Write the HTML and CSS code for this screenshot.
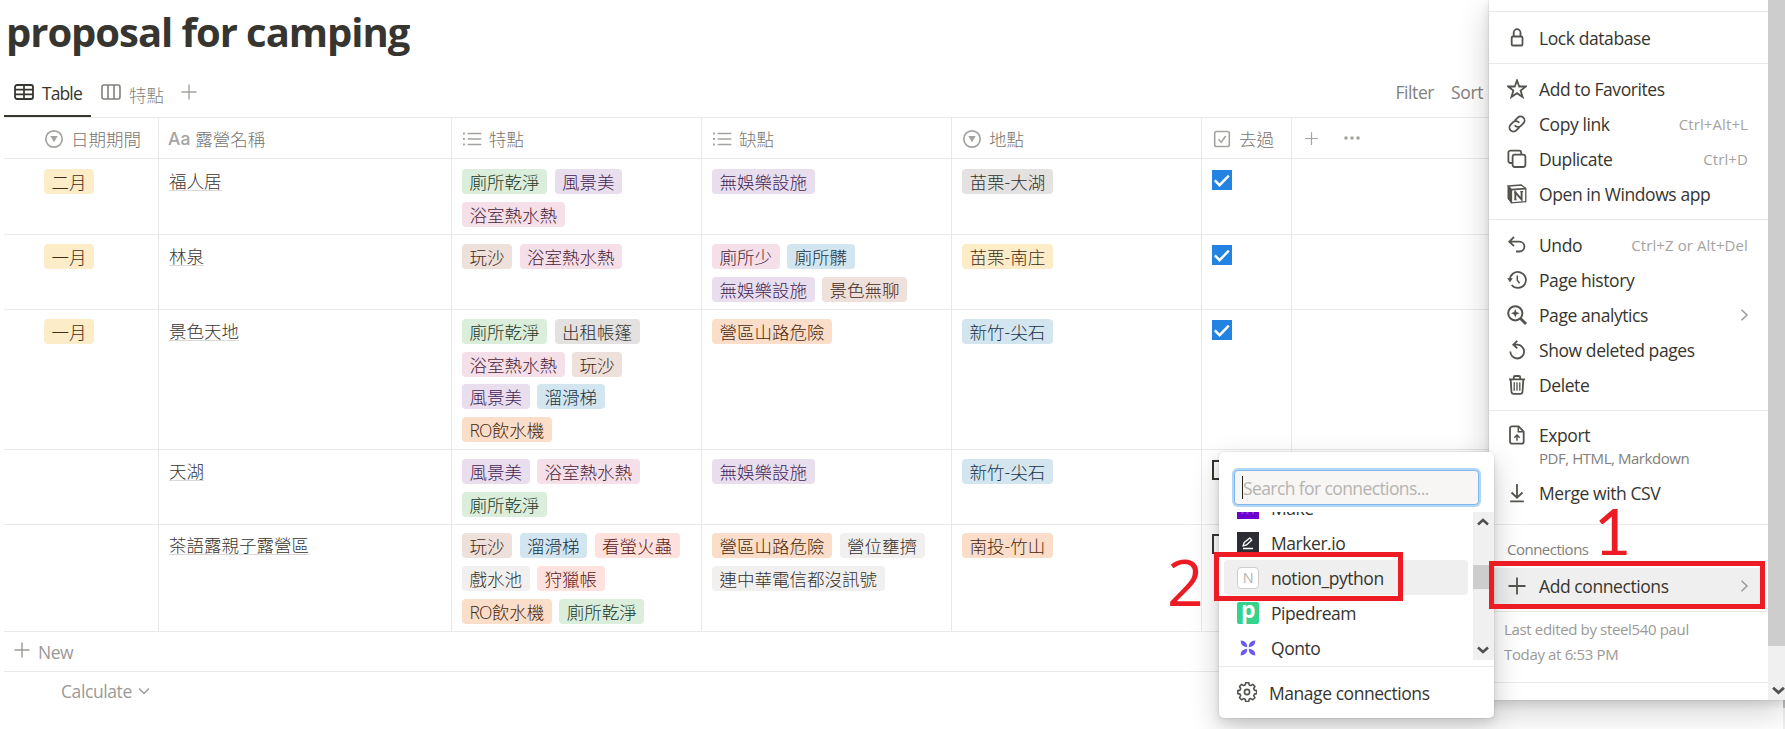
FILE: index.html
```
<!DOCTYPE html>
<html lang="zh-Hant">
<head>
<meta charset="utf-8">
<title>proposal for camping</title>
<link rel="stylesheet" href="styles.css">
</head>
<body>
<svg class="sprite" aria-hidden="true">
  <symbol id="i-select" viewBox="0 0 20 20"><circle cx="10" cy="10" r="8.2" fill="none" stroke="currentColor" stroke-width="1.7"/><path d="M6.300 7h7.400L10 13.200z" fill="currentColor"/></symbol>
  <symbol id="i-list" viewBox="0 0 20 20"><path d="M6.2 4.5h12.6M6.2 10h12.6M6.2 15.5h12.6" stroke="currentColor" stroke-width="1.4" stroke-linecap="round"/><path d="M1 3.6h1.9v1.9H1zM1 9h1.9v1.9H1zM1 14.5h1.9v1.9H1z" fill="currentColor"/></symbol>
  <symbol id="i-plus" viewBox="0 0 20 20"><path d="M10 2.5v15M2.5 10h15" stroke="currentColor" stroke-width="1.4"/></symbol>
  <symbol id="i-chev" viewBox="0 0 20 20"><path d="M7.5 4.8 13 10l-5.500 5.200" fill="none" stroke="currentColor" stroke-width="1.5"/></symbol>
  <symbol id="i-tick" viewBox="0 0 20 20"><path d="M2.800 10.300 7.600 15.200 16.800 5.600" fill="none" stroke="#fff" stroke-width="2.400"/></symbol>
</svg>

<main class="page">
  <h1 class="title">proposal for camping</h1>
  <div class="toolbar">
    <div class="tab tab-active">
      <svg class="ic" viewBox="0 0 20 20"><rect x="1" y="3" width="18" height="14" rx="2" fill="none" stroke="currentColor" stroke-width="1.800"/><path d="M1 7.700h18M1 12.300h18M10 3v14" stroke="currentColor" stroke-width="1.700"/></svg>
      <span>Table</span>
    </div>
    <div class="tab">
      <svg class="ic" viewBox="0 0 20 20"><rect x="1" y="3" width="18" height="14" rx="2" fill="none" stroke="currentColor" stroke-width="1.600"/><path d="M7 3v14M13 3v14" stroke="currentColor" stroke-width="1.600"/></svg>
      <span class="low">特點</span>
    </div>
    <svg class="ic add-view"><use href="#i-plus"/></svg>
    <div class="tools"><span>Filter</span><span>Sort</span></div>
  </div>

  <div class="table">
    <div class="row head">
      <div class="cell c1"><svg class="ic"><use href="#i-select"/></svg><span>日期期間</span></div>
      <div class="cell c2"><span class="aa">Aa</span><span>露營名稱</span></div>
      <div class="cell c3"><svg class="ic"><use href="#i-list"/></svg><span>特點</span></div>
      <div class="cell c4"><svg class="ic"><use href="#i-list"/></svg><span>缺點</span></div>
      <div class="cell c5"><svg class="ic"><use href="#i-select"/></svg><span>地點</span></div>
      <div class="cell c6"><svg class="ic" viewBox="0 0 20 20"><rect x="2.700" y="2.500" width="14.600" height="15" rx="1.800" fill="none" stroke="currentColor" stroke-width="1.600"/><path d="m6.500 10.300 2.600 2.900 4.600-6.200" fill="none" stroke="currentColor" stroke-width="1.500"/></svg><span>去過</span></div>
      <div class="extras">
        <svg class="plus-sm"><use href="#i-plus"/></svg>
        <svg class="dots" viewBox="0 0 16 4"><circle cx="2" cy="2" r="1.800"/><circle cx="8" cy="2" r="1.800"/><circle cx="14" cy="2" r="1.800"/></svg>
      </div>
    </div>

    <div class="row r1">
      <div class="cell c1"><span class="tag yellow">二月</span></div>
      <div class="cell c2"><span class="name">福人居</span></div>
      <div class="cell c3"><span class="tag green">廁所乾淨</span><span class="tag purple">風景美</span><span class="tag pink">浴室熱水熱</span></div>
      <div class="cell c4"><span class="tag purple">無娛樂設施</span></div>
      <div class="cell c5"><span class="tag gray">苗栗-大湖</span></div>
      <div class="cell c6"><span class="box on"><svg><use href="#i-tick"/></svg></span></div>
    </div>
    <div class="row r2">
      <div class="cell c1"><span class="tag yellow">一月</span></div>
      <div class="cell c2"><span class="name">林泉</span></div>
      <div class="cell c3"><span class="tag brown">玩沙</span><span class="tag pink">浴室熱水熱</span></div>
      <div class="cell c4"><span class="tag pink">廁所少</span><span class="tag blue">廁所髒</span><span class="tag purple">無娛樂設施</span><span class="tag brown">景色無聊</span></div>
      <div class="cell c5"><span class="tag yellow">苗栗-南庄</span></div>
      <div class="cell c6"><span class="box on"><svg><use href="#i-tick"/></svg></span></div>
    </div>
    <div class="row r3">
      <div class="cell c1"><span class="tag yellow">一月</span></div>
      <div class="cell c2"><span class="name">景色天地</span></div>
      <div class="cell c3"><span class="tag green">廁所乾淨</span><span class="tag gray">出租帳篷</span><span class="tag pink">浴室熱水熱</span><span class="tag brown">玩沙</span><span class="tag purple">風景美</span><span class="tag blue">溜滑梯</span><span class="tag orange"><span class="ro">RO</span>飲水機</span></div>
      <div class="cell c4"><span class="tag orange">營區山路危險</span></div>
      <div class="cell c5"><span class="tag blue">新竹-尖石</span></div>
      <div class="cell c6"><span class="box on"><svg><use href="#i-tick"/></svg></span></div>
    </div>
    <div class="row r4">
      <div class="cell c1"></div>
      <div class="cell c2"><span class="name">天湖</span></div>
      <div class="cell c3"><span class="tag purple">風景美</span><span class="tag pink">浴室熱水熱</span><span class="tag green">廁所乾淨</span></div>
      <div class="cell c4"><span class="tag purple">無娛樂設施</span></div>
      <div class="cell c5"><span class="tag blue">新竹-尖石</span></div>
      <div class="cell c6"><span class="box"></span></div>
    </div>
    <div class="row r5">
      <div class="cell c1"></div>
      <div class="cell c2"><span class="name">茶語露親子露營區</span></div>
      <div class="cell c3"><span class="tag brown">玩沙</span><span class="tag blue">溜滑梯</span><span class="tag red">看螢火蟲</span><span class="tag light">戲水池</span><span class="tag red">狩獵帳</span><span class="tag orange"><span class="ro">RO</span>飲水機</span><span class="tag green">廁所乾淨</span></div>
      <div class="cell c4"><span class="tag orange">營區山路危險</span><span class="tag light">營位壅擠</span><span class="tag light">連中華電信都沒訊號</span></div>
      <div class="cell c5"><span class="tag orange">南投-竹山</span></div>
      <div class="cell c6"><span class="box"></span></div>
    </div>
    <div class="new-row"><svg class="ic"><use href="#i-plus"/></svg><span>New</span></div>
    <div class="calc"><span>Calculate</span><svg viewBox="0 0 12 12"><path d="m1 3.500 5 5 5-5" fill="none" stroke="currentColor" stroke-width="1.500"/></svg></div>
  </div>
</main>

<aside class="page-scroll"></aside>

<aside class="menu">
  <div class="menu-body">
    <div class="group g-top"></div>
    <div class="group g-lock">
      <div class="item"><svg viewBox="0 0 20 20"><rect x="4.700" y="8.500" width="10.800" height="9" rx="1.300"/><path d="M6.700 8.500V4.800a3.400 3.600 0 0 1 6.800 0v3.700"/></svg><span>Lock database</span></div>
    </div>
    <div class="group g-share">
      <div class="item"><svg viewBox="0 0 20 20"><path d="m10 1.300 2.200 6.200h6.700l-5.300 4 2 6.500L10 14.200 4.400 18l2-6.500-5.300-4h6.700z"/></svg><span>Add to Favorites</span></div>
      <div class="item"><svg viewBox="0 0 20 20"><g transform="rotate(-45 10 10)"><path d="M9.500 14H5a4 4 0 0 1 0-8h3.500a4 4 0 0 1 3.900 4.800"/><path d="M10.500 6H15a4 4 0 0 1 0 8h-3.500a4 4 0 0 1-3.900-4.800"/></g></svg><span>Copy link</span><kbd>Ctrl+Alt+L</kbd></div>
      <div class="item"><svg viewBox="0 0 20 20"><rect x="5.600" y="5.600" width="12.800" height="12.400" rx="2.200"/><path d="M5.600 14H3.400a2 2 0 0 1-2-2V3.600a2 2 0 0 1 2-2h8.800a2 2 0 0 1 2 2v2"/></svg><span>Duplicate</span><kbd>Ctrl+D</kbd></div>
      <div class="item"><svg viewBox="0 0 20 20"><path d="M1 2.300 4.300 5.500V18.800L1 14.800z" fill="#55534e" stroke-width="1"/><path d="m1.200 2 13-1 4.600 3.600v13l-14.300 1.200V5.600z" stroke-width="1.300"/><path d="M4.500 5.600 18.800 4.600"/><path d="M8.300 15.500V8.300l6.300 7.200V7.700" stroke-width="1.900"/><path d="M7 8.200h2.500M7 15.700h2.800M13.300 7.600h2.900" stroke-width="1.100"/></svg><span>Open in Windows app</span></div>
    </div>
    <div class="group g-edit">
      <div class="item"><svg viewBox="0 0 20 20"><path d="M7 2 2.300 6.700 7 11.200M2.500 6.700h9.700c3 0 5.200 2 5.200 4.900s-2.200 4.900-5.200 4.900H9"/></svg><span>Undo</span><kbd>Ctrl+Z or Alt+Del</kbd></div>
      <div class="item"><svg viewBox="0 0 20 20"><path d="M2.900 10a8 8 0 1 1 1.800 5"/><path d="M.2 8.300h5.600L3 12.300z" fill="#55534e" stroke="none"/><path d="M10.300 5.500v4.700l2.300 3" stroke-width="1.500"/></svg><span>Page history</span></div>
      <div class="item"><svg viewBox="0 0 20 20"><circle cx="8.300" cy="8.300" r="7.100" stroke-width="2"/><path d="m13.500 13.500 5.500 5.500" stroke-width="2.800"/><path d="m8.300 4 1.200 3.100 3.100 1.200-3.100 1.200-1.200 3.100-1.200-3.100L4 8.300l3.100-1.200z" fill="#55534e" stroke="none"/></svg><span>Page analytics</span><svg class="go"><use href="#i-chev"/></svg></div>
      <div class="item"><svg viewBox="0 0 20 20"><path d="M6 4.700h4.300a6.900 6.900 0 1 1-7 6.900M10.300.8 6.300 4.700l4 3.700"/></svg><span>Show deleted pages</span></div>
      <div class="item"><svg viewBox="0 0 20 20"><path d="M2 4.300h16M6.800 4V2.300c0-.8.500-1.300 1.300-1.300h3.800c.8 0 1.300.5 1.300 1.300V4M3.700 4.500l.8 12.700c.1 1 .8 1.600 1.700 1.600h7.600c.9 0 1.600-.6 1.700-1.600l.8-12.700"/><path d="M7.200 7.300v8.500M10 7.300v8.500M12.800 7.300v8.500" stroke-width="1.300"/></svg><span>Delete</span></div>
    </div>
    <div class="group g-export">
      <div class="item"><svg viewBox="0 0 20 20"><path d="M5 1.300h6.600l5.100 5.200v10.200a2 2 0 0 1-2 2H5a2 2 0 0 1-2-2V3.300a2 2 0 0 1 2-2z"/><path d="M11.300 1.500v5.300h5.200M10 15.800v-5.500M7.300 12.700 10 10l2.700 2.700" stroke-width="1.500"/></svg><span>Export</span></div>
      <div class="sub">PDF, HTML, Markdown</div>
      <div class="item"><svg viewBox="0 0 20 20"><path d="M10 1v13.500M4.500 9.500l5.500 5.200 5.500-5.200M3.200 18.300h13.600"/></svg><span>Merge with CSV</span></div>
    </div>
    <div class="group g-conn">
      <div class="label">Connections</div>
      <div class="item picked"><svg viewBox="0 0 20 20"><path d="M10 1.500v17M1.500 10h17"/></svg><span>Add connections</span><svg class="go"><use href="#i-chev"/></svg></div>
    </div>
    <div class="group g-meta"><div>Last edited by steel540 paul</div><div>Today at 6:53 PM</div></div>
    <div class="group g-end"></div>
  </div>
  <div class="menu-scroll">
    <div class="menu-thumb"></div>
    <svg viewBox="0 0 12 8"><path d="M1 1.500 6 6l5-4.500" fill="none" stroke="#505050" stroke-width="2.600"/></svg>
  </div>
</aside>

<aside class="popup">
  <div class="search"><span>Search for connections...</span></div>
  <div class="list-wrap">
    <div class="list">
      <div class="conn"><svg viewBox="0 0 22 22"><rect width="22" height="22" fill="#6d00cc"/><path d="M5 17l3-8M10 17l3-8M16 9v8" stroke="#8f3ddb" stroke-width="2"/></svg><span>Make</span></div>
      <div class="conn"><svg viewBox="0 0 22 22"><rect width="22" height="22" fill="#2b2d33"/><path d="m6 14 1.200-3.500 5.600-4.600 2 2.200-5.300 4.800zM6 16.500h10" fill="none" stroke="#fff" stroke-width="1.300" stroke-linejoin="round"/></svg><span>Marker.io</span></div>
      <div class="conn conn-active"><i class="letter">N</i><span>notion_python</span></div>
      <div class="conn"><i class="pipe">p</i><span>Pipedream</span></div>
      <div class="conn"><svg viewBox="0 0 22 22" fill="#6b5aed"><path d="M3.700 3.500c4.500.3 6.500 2.500 6.500 6.700C6 9.700 3.700 8 3.700 3.500zM18.300 3.500c-4.500.3-6.500 2.500-6.500 6.700 4.200-.5 6.500-2.200 6.500-6.700zM3.700 18.500c4.500-.3 6.500-2.500 6.500-6.700-4.200.5-6.500 2.200-6.500 6.700zM18.300 18.500c-4.500-.3-6.500-2.500-6.500-6.700 4.200.5 6.500 2.200 6.500 6.700z"/></svg><span>Qonto</span></div>
    </div>
    <div class="list-scroll">
      <svg viewBox="0 0 12 8"><path d="M1 6.500 6 2l5 4.500" fill="none" stroke="#505050" stroke-width="2.500"/></svg>
      <div class="list-thumb"></div>
      <svg viewBox="0 0 12 8"><path d="M1 1.500 6 6l5-4.500" fill="none" stroke="#505050" stroke-width="2.500"/></svg>
    </div>
  </div>
  <div class="manage"><svg viewBox="0 0 20 20"><path d="M8.500 1.200h3l.5 2.200 1.600.7 2-1.200 2.100 2.100-1.200 2 .7 1.600 2.200.500v3l-2.200.5-.7 1.600 1.200 2-2.100 2.100-2-1.200-1.600.7-.5 2.200h-3L8 17.800l-1.600-.7-2 1.200-2.100-2.100 1.200-2-.7-1.600-2.200-.5v-3l2.200-.5.700-1.600-1.200-2 2.100-2.100 2 1.200L8 3.400z" transform="translate(.2 -.5)" stroke-linejoin="round"/><circle cx="10" cy="10" r="2.600"/></svg><span>Manage connections</span></div>
</aside>

<div class="mark mark-one"></div>
<div class="mark mark-two"></div>
<div class="num num-one">1</div>
<div class="num num-two">2</div>
</body>
</html>
```

FILE: styles.css
```
* { box-sizing: border-box; }
html, body { margin: 0; height: 729px; overflow: hidden; background: #fff; }
body {
  position: relative;
  font: 17.5px/25px "Open Sans", "Noto Sans CJK TC", sans-serif;
  color: #37352f;
}
svg { flex: none; display: block; }
.sprite { position: absolute; width: 0; height: 0; }
.ic { width: 20px; height: 20px; }

.page { padding-left: 4px; }
.title {
  margin: 0;
  padding: 4px 0 0 2px;
  height: 68px;
  font-size: 40px;
  line-height: 56px;
  font-weight: 700;
  letter-spacing: -1.05px;
}
.toolbar { display: flex; height: 49px; color: #82807b; letter-spacing: -0.4px; }
.tab { display: flex; gap: 8px; padding: 14px 10px 0; height: 49px; }
.tab span { line-height: 22px; }
.tab-active { width: 87px; color: #37352f; border-bottom: 2px solid #37352f; letter-spacing: -0.9px; }
.tab .low { padding-top: 2px; letter-spacing: 0; font-weight: 300; }
.add-view { margin: 14px 0 0 5px; color: #a5a39f; }
.tools { display: flex; gap: 17px; margin-left: auto; padding: 12px 302px 0 0; }

.table { border-top: 1px solid #e9e9e7; }
.row { display: flex; border-bottom: 1px solid #e9e9e7; font-weight: 300; }
.cell {
  display: flex;
  flex-wrap: wrap;
  align-content: flex-start;
  gap: 7.6px 7.5px;
  padding: 9px 10px 0 10px;
  border-right: 1px solid #e9e9e7;
}
.c1 { width: 155px; }
.c2 { width: 293px; }
.c3, .c4, .c5 { width: 250px; }
.c6 { width: 90px; }
.head { height: 41px; color: #777570; }
.head .cell { gap: 7px; padding-top: 11px; padding-right: 0; flex-wrap: nowrap; }
.head .c2 { gap: 5px; padding-left: 9px; }
.head .ic { color: #a5a39f; }
.head span { line-height: 21px; }
.head .aa { color: #a5a39f; font: 500 17.5px/20px Inter, sans-serif; }
.extras { display: flex; align-items: center; gap: 24px; padding-left: 11px; color: #a5a39f; }
.plus-sm { width: 17px; height: 17px; }
.dots { width: 16px; height: 4px; fill: #a5a39f; }
.r1 { height: 76px; }
.r1 .cell { padding-top: 10px; }
.r2, .r4 { height: 75px; }
.r3 { height: 140px; }
.r5 { height: 107px; }
.r5 .cell { padding-top: 8.4px; }
.row .cell.c1 { padding-left: 40px; }

.tag { height: 25px; padding: 0 7.5px; border-radius: 4px; line-height: 27px; white-space: nowrap; }
.ro { letter-spacing: -0.8px; }
.yellow { background: #fdecc8; color: #402c1b; }
.green { background: #dbeddb; color: #1c3829; }
.purple { background: #e8deee; color: #412454; }
.pink { background: #f5e0e9; color: #4c2337; }
.gray { background: #e3e2e0; color: #32302c; }
.brown { background: #eee0da; color: #442a1e; }
.blue { background: #d3e5ef; color: #183347; }
.orange { background: #fadec9; color: #49290e; }
.red { background: #ffe2dd; color: #5d1715; }
.light { background: #f1f0ef; color: #32302c; }
.name { height: 22px; line-height: 24px; border-bottom: 1px solid #d9d8d6; }
.box { width: 20px; height: 20px; margin-top: 1px; border: 2px solid #37352f; }
.box.on { border: 0; background: #2383e2; }
.box svg { width: 20px; height: 20px; }
.new-row { display: flex; gap: 6px; height: 40px; padding: 8px 0 0 8px; color: #9b9a97; border-bottom: 1px solid #e9e9e7; letter-spacing: -0.5px; }
.calc { display: flex; gap: 6px; padding: 7px 0 0 57px; color: #9b9a97; letter-spacing: -0.4px; }
.calc svg { width: 12px; height: 12px; margin-top: 6px; }

.menu {
  position: absolute;
  left: 1489px;
  top: 0;
  width: 296px;
  height: 700px;
  display: flex;
  background: #fff;
  box-shadow: 0 0 0 1px rgba(15,15,15,.05), 0 4px 8px rgba(15,15,15,.1), 0 11px 30px rgba(15,15,15,.2);
}
.menu-body { width: 279px; letter-spacing: -0.42px; }
.group { border-bottom: 1px solid #e9e9e7; }
.g-top { height: 12px; }
.g-lock { height: 52px; padding-top: 8px; }
.g-share { height: 156px; padding-top: 7px; }
.g-edit { height: 191px; padding-top: 7px; }
.g-export { height: 114px; padding-top: 6px; }
.g-conn { height: 87px; padding-top: 12px; }
.g-meta { height: 71px; padding: 5px 0 0 15px; font-size: 15px; color: #9b9a97; letter-spacing: -0.35px; }
.g-end { border: 0; }
.item { display: flex; align-items: center; gap: 12px; height: 35px; padding: 0 20px 0 18px; }
.item svg { width: 20px; height: 20px; fill: none; stroke: #55534e; stroke-width: 1.8; }
.item span { padding-top: 1px; }
.item kbd { margin-left: auto; padding-top: 1px; font: inherit; font-size: 15px; letter-spacing: 0.1px; color: #a5a39f; }
.item .go { margin-left: auto; margin-right: -6px; color: #9b9a97; stroke: none; }
.sub { height: 23px; padding-left: 50px; font-size: 15px; line-height: 12px; letter-spacing: -0.45px; color: #82807b; }
.label { height: 31px; padding-left: 18px; font-size: 15px; letter-spacing: -0.5px; color: #82807b; }
.picked { height: 36px; margin: 0 8px 0 5px; padding: 0 12px 0 13px; background: #efefef; }
.menu-scroll { width: 17px; background: #f0f0f0; }
.menu-thumb { height: 646px; background: #cdcdcd; }
.menu-scroll svg { width: 13px; height: 9px; margin: 40px 0 0 4px; }
.page-scroll { position: absolute; left: 1783px; top: 700px; width: 2px; height: 29px; background: linear-gradient(#bdbdbd 8px, #f0f0f0 8px); }

.popup {
  position: absolute;
  left: 1219px;
  top: 452px;
  width: 275px;
  height: 266px;
  padding-top: 18px;
  background: #fff;
  border-radius: 5px;
  box-shadow: 0 0 0 1px rgba(15,15,15,.05), 0 4px 8px rgba(15,15,15,.1), 0 11px 30px rgba(15,15,15,.2);
  letter-spacing: -0.45px;
}
.search {
  width: 245px;
  height: 35px;
  margin-left: 15px;
  padding: 5px 0 0 7px;
  background: #f7f6f5;
  border: 1px solid #7cb8ee;
  border-radius: 4px;
  box-shadow: 0 0 0 2px #b4d6f6;
  color: #b5b3b0;
  letter-spacing: -0.6px;
}
.search span { display: block; height: 23px; line-height: 25px; border-left: 1px solid #222; }
.list-wrap { display: flex; justify-content: space-between; height: 148px; margin-top: 7px; overflow: hidden; }
.list { width: 249px; padding-left: 5px; margin-top: -22px; }
.conn { display: flex; align-items: center; gap: 12px; height: 35px; padding-left: 13px; }
.conn svg { width: 22px; height: 22px; }
.conn span { padding-top: 2px; }
.conn-active { background: #efefef; border-radius: 4px; }
.letter, .pipe { width: 22px; height: 22px; border-radius: 4px; font-style: normal; text-align: center; }
.letter { border: 1px solid #cfcecc; background: #fff; color: #b5b3b0; font-size: 14.5px; line-height: 20px; }
.pipe { border-radius: 2px; background: #34d28b; color: #fff; font-size: 23px; line-height: 15px; font-weight: 700; }
.list-scroll { width: 21px; padding: 6px 4px; background: #f0f0f0; }
.list-scroll svg { width: 12px; height: 8px; }
.list-thumb { width: 21px; height: 24px; margin: 39px -4px 57px; background: #cdcdcd; }
.manage { display: flex; gap: 12px; height: 52px; margin-top: 6px; padding: 14px 0 0 18px; border-top: 1px solid #e9e9e7; }
.manage svg { width: 20px; height: 20px; margin-top: 1px; fill: none; stroke: #55534e; stroke-width: 1.6; }

.mark { position: absolute; border: 5px solid #ed1c24; }
.mark-one { left: 1489px; top: 561px; width: 276px; height: 48px; }
.mark-two { left: 1214px; top: 552px; width: 189px; height: 49px; }
.num { position: absolute; font-size: 64px; line-height: 64px; color: #ed1c24; }
.num-one { left: 1594px; top: 499px; font-family: Lato, sans-serif; }
.num-two { left: 1167px; top: 550px; }
```
